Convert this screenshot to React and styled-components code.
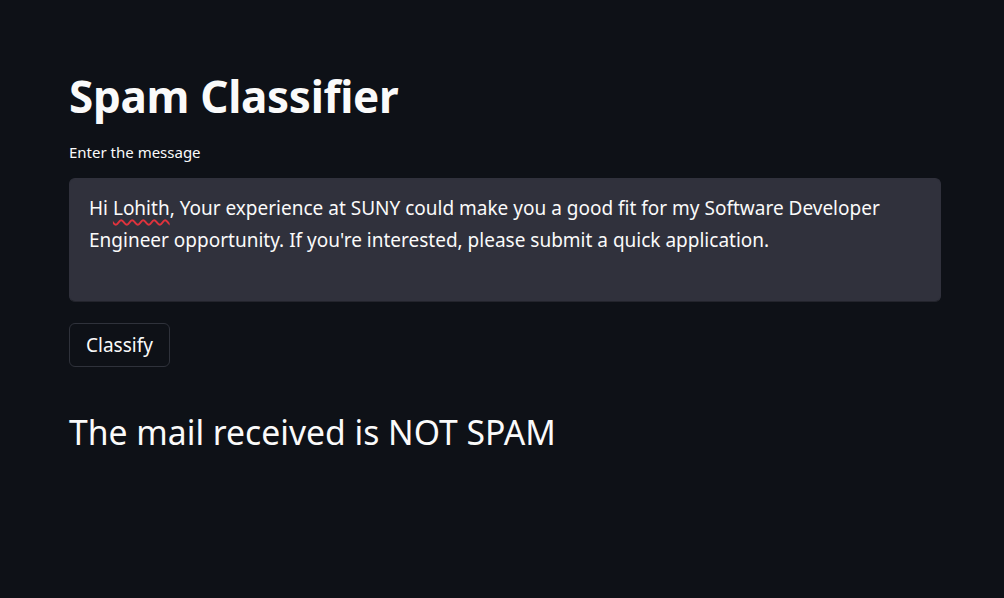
import styled, { createGlobalStyle } from 'styled-components';

const GlobalStyle = createGlobalStyle`
  html, body {
    margin: 0;
    padding: 0;
    background: #0e1117;
    color: #fafafa;
    font-family: "Noto Sans", "Open Sans", sans-serif;
  }
`;

const Page = styled.main`
  min-height: 598px;
  box-sizing: border-box;
  padding: 64px 63px 40px 69px;
  display: flex;
  flex-direction: column;
`;

const Title = styled.h1`
  margin: 0;
  font-size: 44px;
  font-weight: 700;
  line-height: 64px;
  letter-spacing: -0.3px;
  color: #fafafa;
`;

const Label = styled.label`
  margin-top: 14px;
  font-size: 15px;
  line-height: 20px;
  color: #fafafa;
`;

const TextBox = styled.div`
  margin-top: 16px;
  height: 124px;
  box-sizing: border-box;
  padding: 13px 19px;
  background: #30313c;
  border: 1px solid #30313c;
  border-bottom-color: #23242c;
  border-radius: 6px;
  font-size: 19px;
  line-height: 32px;
  color: #fafafa;
  white-space: nowrap;
`;

const Misspelled = styled.span`
  text-decoration: underline wavy #e0323c;
  text-decoration-thickness: 1.5px;
  text-underline-offset: 4px;
`;

const Button = styled.button`
  align-self: flex-start;
  margin-top: 21px;
  height: 44px;
  padding: 0 16px;
  background: #0e1117;
  border: 1px solid #2f323b;
  border-radius: 6px;
  color: #fafafa;
  font-family: inherit;
  font-size: 19px;
`;

const Result = styled.h3`
  margin: 41px 0 0;
  font-size: 33.7px;
  font-weight: 400;
  line-height: 48px;
  color: #fafafa;
`;

export default function App() {
  return (
    <>
      <GlobalStyle />
      <Page>
        <Title>Spam Classifier</Title>
        <Label>Enter the message</Label>
        <TextBox>
          Hi <Misspelled>Lohith</Misspelled>, Your experience at SUNY could make you a good fit for my Software Developer
          <br />
          Engineer opportunity. If you're interested, please submit a quick application.
        </TextBox>
        <Button>Classify</Button>
        <Result>The mail received is NOT SPAM</Result>
      </Page>
    </>
  );
}
